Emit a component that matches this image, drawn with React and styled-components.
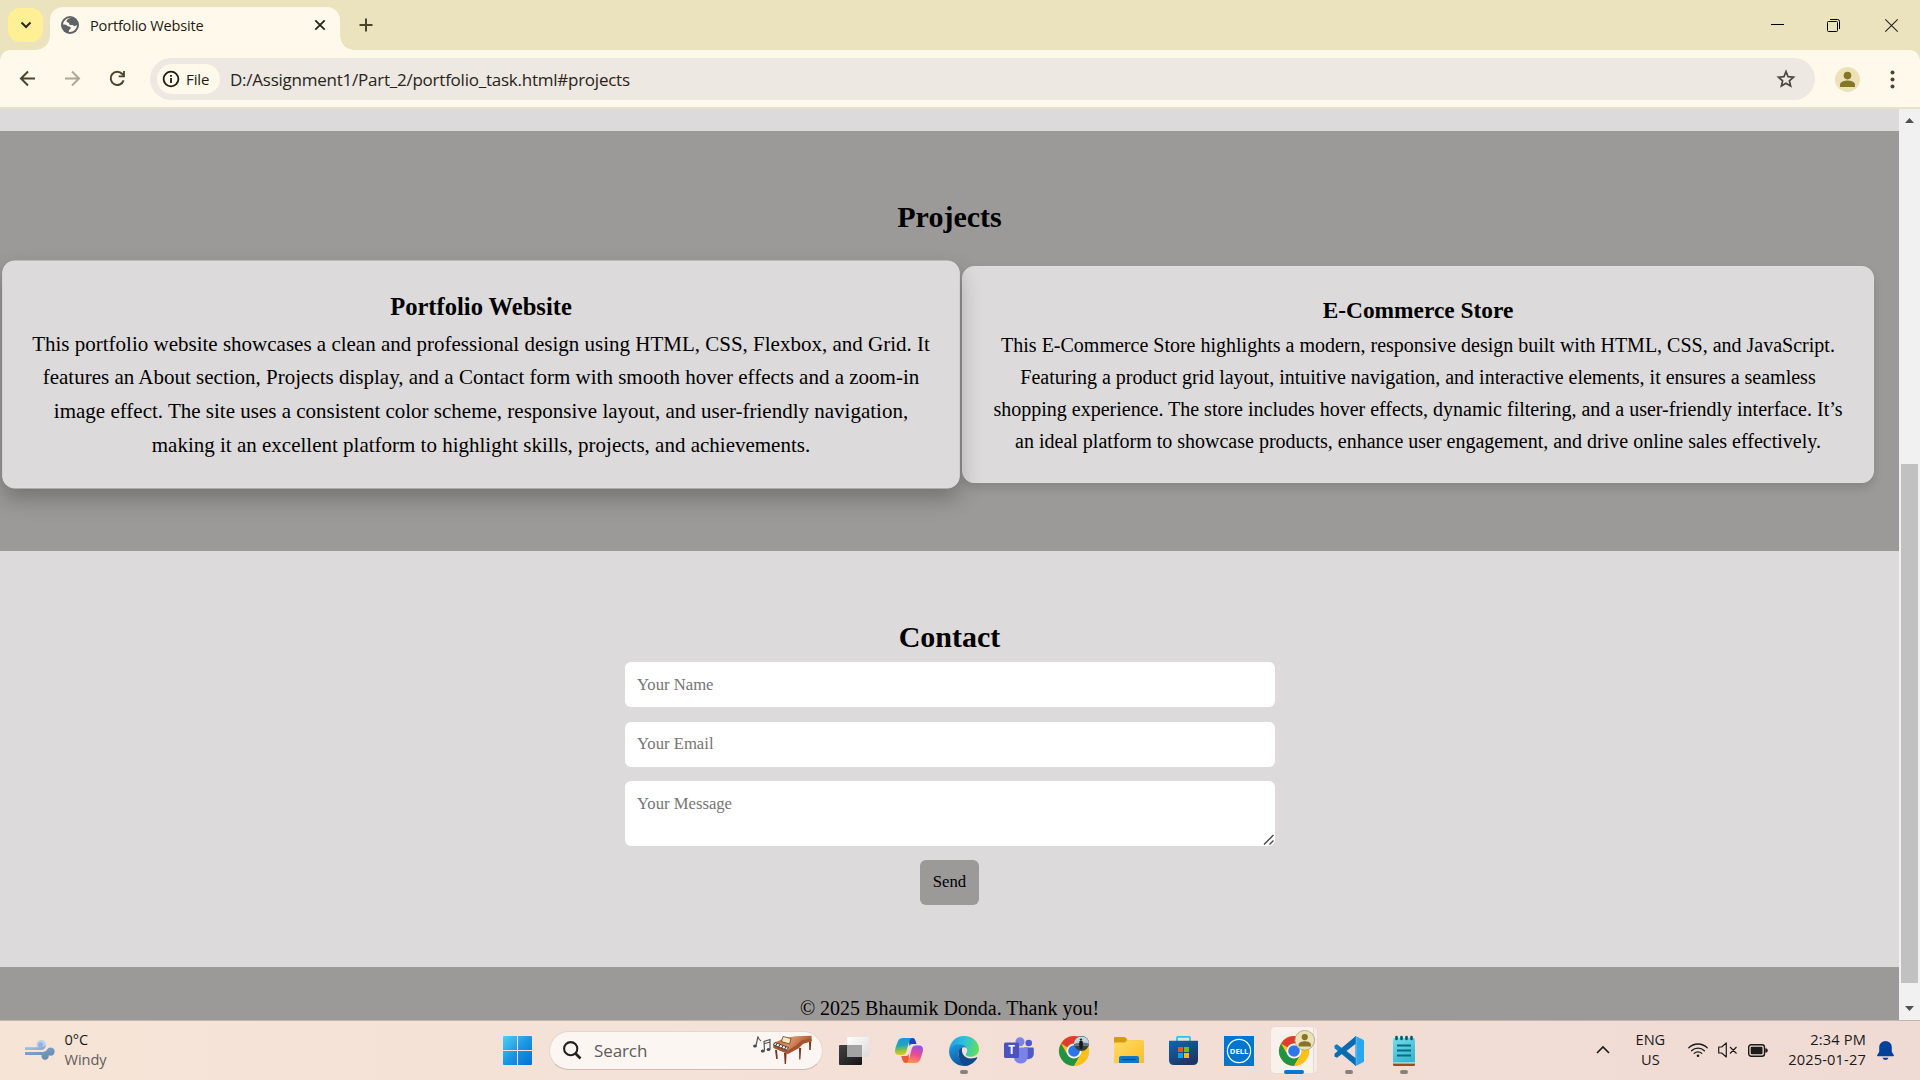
import React from "react";
import styled, { createGlobalStyle } from "styled-components";

const GlobalStyle = createGlobalStyle`
  * { box-sizing: border-box; margin: 0; padding: 0; }
  body { margin: 0; overflow: hidden; }
  svg { display: block; flex: none; overflow: visible; }
`;

const UI = `"Open Sans", "Noto Sans", sans-serif`;
const SERIF = `"Liberation Serif", "Times New Roman", serif`;

const Screen = styled.div`
  width: 1920px;
  height: 1080px;
  display: flex;
  flex-direction: column;
  overflow: hidden;
  font-family: ${UI};
  background: #ebe3bd;
`;

/* ---------- browser chrome ---------- */

const TabStrip = styled.header`
  height: 50px;
  flex: none;
  display: flex;
  align-items: flex-end;
  padding-left: 8px;
`;

const TabSearch = styled.button`
  width: 35px;
  height: 34px;
  margin-bottom: 8px;
  border: 0;
  border-radius: 12px;
  background: #fff095;
  display: flex;
  align-items: center;
  justify-content: center;
`;

const Tab = styled.div`
  position: relative;
  width: 290px;
  height: 43px;
  margin-left: 7px;
  padding: 0 14px 7px 11px;
  display: flex;
  align-items: center;
  border-radius: 13px 13px 0 0;
  background: #fff9eb;
  &::before, &::after {
    content: "";
    position: absolute;
    bottom: 0;
    width: 14px;
    height: 14px;
  }
  &::before {
    left: -14px;
    background: radial-gradient(circle at 0 0, transparent 13.5px, #fff9eb 14px);
  }
  &::after {
    right: -14px;
    background: radial-gradient(circle at 100% 0, transparent 13.5px, #fff9eb 14px);
  }
`;

const TabTitle = styled.span`
  flex: 1;
  margin-left: 11px;
  font-size: 14.6px;
  letter-spacing: -0.21px;
  line-height: 20px;
  color: #1f1c12;
  white-space: nowrap;
`;

const NewTab = styled.div`
  margin: 0 0 18px 19px;
`;

const WindowButtons = styled.div`
  margin-left: auto;
  height: 50px;
  padding-right: 22px;
  display: flex;
  align-items: center;
  gap: 43px;
  svg:last-child { margin-left: 2px; }
`;

const Toolbar = styled.div`
  height: 59px;
  flex: none;
  display: flex;
  align-items: center;
  padding: 1px 21px 0 17px;
  background: #fff9eb;
  border-bottom: 2px solid #e8e2cd;
  border-radius: 11px 11px 0 0;
`;

const NavButtons = styled.div`
  display: flex;
  gap: 24px;
  margin-right: 24px;
  padding-bottom: 1px;
`;

const ReloadSlot = styled.div`
  margin-left: 2px;
`;

const Omnibox = styled.div`
  flex: 1;
  height: 42px;
  border-radius: 21px;
  background: #ede8e1;
  display: flex;
  align-items: center;
  padding: 0 19px 0 7px;
`;

const FileChip = styled.div`
  width: 63px;
  height: 30px;
  border-radius: 15px;
  background: #fff9eb;
  display: flex;
  align-items: center;
  padding-left: 5px;
  gap: 6px;
  font-size: 15px;
  font-weight: 500;
  letter-spacing: -0.1px;
  color: #1f1c12;
`;

const Url = styled.span`
  flex: 1;
  margin-left: 10px;
  padding-top: 1px;
  font-size: 17px;
  letter-spacing: -0.24px;
  color: #28241a;
  white-space: nowrap;
`;

const Avatar = styled.div`
  margin: 0 26px 0 20px;
`;

/* ---------- page ---------- */

const Viewport = styled.div`
  height: 911px;
  flex: none;
  display: flex;
`;

const Page = styled.main`
  width: 1899px;
  height: 911px;
  padding-top: 22px;
  overflow: hidden;
  background: #dcdadb;
  font-family: ${SERIF};
  font-size: 20px;
  line-height: 32px;
  color: #000;
  text-align: center;
`;

const ProjectsSection = styled.section`
  height: 420px;
  padding: 61.5px 25px 0;
  background: #9c9a98;
`;

const SectionTitle = styled.h2`
  font-size: 30px;
  line-height: 48px;
  font-weight: bold;
`;

const ProjectGrid = styled.div`
  margin-top: 25.5px;
  display: grid;
  grid-template-columns: 1fr 1fr;
  gap: 25px;
`;

const ProjectCard = styled.article`
  padding: 25px;
  border: 1px solid #dfdddd;
  border-radius: 12px;
  background: #dcdadb;
  box-shadow: ${(p) => (p.$raised ? "0 10px 20px rgba(0,0,0,0.25)" : "0 5px 10px rgba(0,0,0,0.13)")};
  transform: ${(p) => (p.$raised ? "scale(1.05)" : "none")};
`;

const CardTitle = styled.h3`
  font-size: 23.4px;
  line-height: 37.4px;
  font-weight: bold;
`;

const ContactSection = styled.section`
  height: 416px;
  padding-top: 61.5px;
`;

const ContactForm = styled.form`
  width: 650px;
  margin: 1.5px auto 0;
  display: flex;
  flex-direction: column;
  align-items: center;
  gap: 14px;
`;

const Field = styled.input`
  width: 650px;
  height: 45px;
  padding: 0 12.5px ${(p) => p.$lift || 0}px;
  margin-bottom: ${(p) => p.$after || 0}px;
  border: 0;
  border-radius: 6px;
  background: #fff;
  font-family: ${SERIF};
  font-size: 16.67px;
  &::placeholder { color: #757575; }
`;

const MessageWrap = styled.div`
  position: relative;
  height: 65px;
  svg { position: absolute; right: 1px; bottom: 1px; }
`;

const Message = styled.textarea`
  display: block;
  width: 650px;
  height: 65px;
  padding: 13px 12.5px;
  border: 0;
  border-radius: 6px;
  background: #fff;
  font-family: ${SERIF};
  font-size: 16.67px;
  line-height: 20px;
  resize: none;
  &::placeholder { color: #757575; }
`;

const SendButton = styled.button`
  width: 59px;
  height: 45px;
  padding-bottom: 2px;
  border: 0;
  border-radius: 6px;
  background: #9c9a98;
  font-family: ${SERIF};
  font-size: 16.67px;
  color: #000;
`;

const PageFooter = styled.footer`
  height: 100px;
  padding-top: 25px;
  background: #9c9a98;
`;

const ScrollTrack = styled.div`
  width: 21px;
  background: #f1f1f1;
  display: flex;
  flex-direction: column;
  align-items: center;
  padding: 9px 0;
`;

const ScrollThumb = styled.div`
  width: 17px;
  height: 519px;
  margin: 341px 0 auto;
  background: #c1c1c1;
`;

/* ---------- taskbar ---------- */

const Taskbar = styled.footer`
  height: 60px;
  flex: none;
  display: flex;
  align-items: center;
  border-top: 1px solid #c4b5ae;
  background: linear-gradient(90deg, #f6e4d7 0%, #f4e1d7 35%, #f2ddd5 70%, #f0dbd4 100%);
`;

const Weather = styled.div`
  width: 478px;
  padding: 0 0 2px 25px;
  display: flex;
  align-items: center;
  gap: 9.5px;
`;

const TwoLines = styled.div`
  padding-bottom: 2px;
  font-size: 14.6px;
  line-height: 20px;
  letter-spacing: ${(p) => p.$track || "-0.05px"};
  color: #1b1a19;
  text-align: ${(p) => p.$align || "left"};
  white-space: nowrap;
`;

const Muted = styled.div`
  color: #625b57;
`;

const StartSlot = styled.div`
  width: 79px;
  display: flex;
  justify-content: center;
`;

const SearchBox = styled.div`
  width: 274px;
  height: 39px;
  margin-left: -8.5px;
  margin-top: -1px;
  border-radius: 20px;
  border: 1px solid #e6d5cd;
  border-bottom-color: #cdbab2;
  background: #fcf6f3;
  display: flex;
  align-items: center;
  padding: 0 10px 0 13px;
`;

const SearchLabel = styled.span`
  flex: 1;
  margin-left: 13.5px;
  font-size: 17px;
  letter-spacing: -0.1px;
  color: #5f5b59;
`;

const AppSlots = styled.nav`
  display: flex;
  margin-left: 4px;
`;

const AppSlot = styled.div`
  position: relative;
  width: 55px;
  height: 59px;
  display: flex;
  align-items: center;
  justify-content: center;
`;

const ActiveTile = styled.div`
  position: absolute;
  left: 3.5px;
  top: 5px;
  width: 48px;
  height: 48px;
  border-radius: 5px;
  border: 1px solid #eadbd5;
  background: linear-gradient(90deg, #faf1ed 42px, #e6d8d2 42px, #e6d8d2 43px, #f7ebe6 43px);
`;

const AppIcon = styled.div`
  position: relative;
`;

const Indicator = styled.div`
  position: absolute;
  bottom: 6px;
  left: 50%;
  width: ${(p) => (p.$active ? 20 : 8)}px;
  height: 4px;
  border-radius: 2px;
  transform: translateX(-50%);
  background: ${(p) => (p.$active ? "#0078d4" : "#8a807b")};
`;

const Tray = styled.div`
  margin-left: auto;
  padding: 0 26px 1px 0;
  display: flex;
  align-items: center;
`;

const TrayItem = styled.div`
  margin-left: ${(p) => p.$gap}px;
`;

/* ---------- icons ---------- */

const Line = ({ w, h, d, color = "#2b271c", sw = 2, ...rest }) => (
  <svg width={w} height={h} viewBox={`0 0 ${w} ${h}`} fill="none" stroke={color} strokeWidth={sw} {...rest}>
    <path d={d} />
  </svg>
);

const Globe = () => (
  <svg width="18" height="18" viewBox="0 0 18 18">
    <circle cx="9" cy="9" r="9" fill="#5f6368" />
    <path d="M10.200 1.900C8.200 2 5.500 3.300 5.600 5.200c.1 1.300 1.500.9 2.300 1.700.6.700 0 1.500.9 1.900 1.300.6 2.600-.2 3.500.8.6.7 1.500.5 3.700-.6A7.100 7.100 0 0 1 7.900 16v-1.600c.2-.9 2-1.200 1.900-2.600-.1-1.500-2.700-.9-3.600-2.100-.9-1.100-1.900-1.200-4.200-1.200A7.200 7.200 0 0 1 10.200 1.900z" fill="#fff9eb" />
  </svg>
);

const Reload = () => (
  <svg width="17" height="17" viewBox="0 0 17 17">
    <path d="M14.600 10.400A6.600 6.600 0 1 1 13.300 4l1.200 1.500" fill="none" stroke="#4a452c" strokeWidth="2" />
    <path d="M15.900 1v6.300H9.700V5.500h4.400V1z" fill="#4a452c" />
  </svg>
);

const Info = () => (
  <svg width="18" height="18" viewBox="0 0 18 18">
    <circle cx="9" cy="9" r="7.400" fill="none" stroke="#1f1c12" strokeWidth="1.800" />
    <path d="M8.100 8h1.800v5H8.100zM8.100 5h1.800v1.800H8.100z" fill="#1f1c12" />
  </svg>
);

const Star = () => (
  <svg width="20" height="20" viewBox="0 0 20 20" fill="none" stroke="#4a4740" strokeWidth="1.700">
    <path d="M10 2.600l2.100 5.100 5.400.5-4.100 3.600 1.200 5.300-4.600-2.800-4.600 2.800 1.200-5.300-4.100-3.600 5.400-.5z" />
  </svg>
);

const Person = ({ size, ring }) => (
  <svg width={size} height={size} viewBox="0 0 25 25">
    <circle cx="12.500" cy="12.500" r={ring ? 12 : 12.5} fill="#ebe2b7" stroke={ring ? "#aaa283" : "none"} />
    <circle cx="12.500" cy="8.600" r="3.800" fill="#857626" />
    <path d="M5 20v-2.400c0-2.800 4.600-4 7.500-4s7.500 1.200 7.500 4V20z" fill="#857626" />
  </svg>
);

const WindowsLogo = () => (
  <svg width="29" height="29" viewBox="0 0 29 29">
    <defs>
      <linearGradient id="win" x1="0" y1="0" x2="1" y2="1">
        <stop offset="0" stopColor="#4fd0fb" />
        <stop offset="0.5" stopColor="#1c95e2" />
        <stop offset="1" stopColor="#0571d2" />
      </linearGradient>
    </defs>
    <path d="M1 0h13v14H0V1q0-1 1-1zM15 0h13q1 0 1 1v13H15zM0 15h14v14H1q-1 0-1-1zM15 15h14v13q0 1-1 1H15z" fill="url(#win)" />
  </svg>
);

const Wind = () => (
  <svg width="30" height="20" viewBox="0 0 30 20">
    <defs>
      <linearGradient id="wndA" x1="0" y1="0" x2="1" y2="0">
        <stop offset="0" stopColor="#a3bce2" />
        <stop offset="1" stopColor="#8aa9d8" />
      </linearGradient>
      <linearGradient id="wndB" x1="0" y1="0" x2="1" y2="1">
        <stop offset="0" stopColor="#86abd3" />
        <stop offset="1" stopColor="#5d86ab" />
      </linearGradient>
    </defs>
    <circle cx="16.300" cy="4.700" r="4.700" fill="#b9cdec" />
    <circle cx="15.500" cy="5" r="2.400" fill="#93afdc" />
    <path d="M0 7.200h15.500q3.500 0 5.300-2Q20.500 10 16 10H0z" fill="url(#wndA)" />
    <path d="M0 12h18q3-.2 4-2.200a4 4 0 1 1 3.200 5.800q-1.200 0-1.600-.2a3.600 3.600 0 1 1-6.900-.4H0z" fill="url(#wndB)" />
  </svg>
);

const Piano = () => (
  <svg width="59" height="30" viewBox="0 0 59 30">
    <defs>
      <linearGradient id="pno" x1="0" y1="0" x2="1" y2="0.4">
        <stop offset="0" stopColor="#b35f3c" />
        <stop offset="0.5" stopColor="#d98f66" />
        <stop offset="1" stopColor="#a54e2b" />
      </linearGradient>
    </defs>
    <g fill="none" stroke="#55585b" strokeWidth="1.200">
      <path d="M3 10.500L5 1.500Q5.500 4.500 8 6M11.500 15.500L11 6.500L17 4.500V14M11.200 8.800L17 7" />
    </g>
    <g fill="#45484b">
      <ellipse cx="2" cy="11" rx="1.900" ry="1.500" />
      <ellipse cx="9.800" cy="16" rx="2" ry="1.500" />
      <ellipse cx="15.500" cy="14.500" rx="1.900" ry="1.500" />
    </g>
    <path d="M22 15h2l.8 9h-1.600zM31 18h2.600l-.6 11h-1.300zM46 13h2.200l-.8 11.500h-1.200zM56 5h2.300l-.6 10h-1.500z" fill="#7b3420" />
    <path d="M20.500 8L31 3.500 42 1.200 58.500.8V6L50 8.500 46 12.500 35 18.500 20.500 12.500z" fill="url(#pno)" />
    <path d="M20.500 10L34.500 15.500 43 10.500 48.500 5.500 58.500 3.500V6.200L50 8.800 46 13 35 19 20.500 13z" fill="#a4522f" />
    <path d="M22 7.500L35.500 12.500 33.500 15 20.500 10z" fill="#f0ece6" stroke="#3c2a22" strokeWidth=".8" />
    <path d="M24 8.500l-1.500 2.500M27 9.600l-1.500 2.500M30 10.700l-1.500 2.500M33 11.800l-1.500 2.500" stroke="#333" strokeWidth="1" />
    <path d="M30 1.500L38 3.500 36.500 9 28.500 6.500z" fill="#f8e9c0" stroke="#6e3f20" strokeWidth=".8" />
  </svg>
);

const TaskView = () => (
  <svg width="30" height="28" viewBox="0 0 30 28">
    <defs>
      <linearGradient id="tv1" x1="0" y1="0" x2="1" y2="1">
        <stop offset="0" stopColor="#424242" />
        <stop offset="1" stopColor="#161616" />
      </linearGradient>
      <linearGradient id="tv2" x1="0" y1="0" x2="1" y2="1">
        <stop offset="0" stopColor="#fff" />
        <stop offset="1" stopColor="#dcdcdc" />
      </linearGradient>
    </defs>
    <rect x="0" y="8" width="23" height="20" rx="1" fill="url(#tv1)" />
    <rect x="8" y="0" width="22" height="20" rx="1" fill="url(#tv2)" />
    <rect x="8" y="8" width="15" height="12" fill="#a3a3a3" />
  </svg>
);

const Copilot = () => (
  <svg width="28" height="25" viewBox="0 0 28 25">
    <defs>
      <linearGradient id="cp1" x1="0.2" y1="0" x2="0.3" y2="1">
        <stop offset="0" stopColor="#1596e4" />
        <stop offset="0.45" stopColor="#22a6b5" />
        <stop offset="0.75" stopColor="#8fc43f" />
        <stop offset="1" stopColor="#f0c51e" />
      </linearGradient>
      <linearGradient id="cp2" x1="0.6" y1="0" x2="0.3" y2="1">
        <stop offset="0" stopColor="#9a50e4" />
        <stop offset="0.5" stopColor="#ec4c93" />
        <stop offset="1" stopColor="#ff9a42" />
      </linearGradient>
    </defs>
    <path d="M14 0h3.500q2.200 0 2.900 2.400L21.500 6H17q-2 0-2.700 2z" fill="#1d3fc4" />
    <path d="M8 0h9q-2 .4-2.700 3l-3 10.500Q10.400 17 7.500 17H4Q0 17 0 13q0-2.500 1.500-6L3 3Q4.300 0 8 0z" fill="url(#cp1)" />
    <path d="M14 25h-3.500q-2.200 0-2.900-2.400L6.300 18H11q2 0 2.700-2z" fill="#ef5a3c" />
    <path d="M20 25h-9q2-.4 2.700-3l3-11Q17.600 7.500 20.500 7.500H24q4 0 4 4 0 2.500-1.500 6L25 22q-1.300 3-5 3z" fill="url(#cp2)" />
  </svg>
);

const Edge = () => (
  <svg width="30" height="30" viewBox="0 0 30 30">
    <defs>
      <linearGradient id="eg1" x1="0" y1="0.3" x2="1" y2="0.5">
        <stop offset="0" stopColor="#249fe2" />
        <stop offset="0.5" stopColor="#2bc3dc" />
        <stop offset="1" stopColor="#63df55" />
      </linearGradient>
      <linearGradient id="eg2" x1="0" y1="0" x2="0.4" y2="1">
        <stop offset="0" stopColor="#1b9de2" />
        <stop offset="1" stopColor="#0c59a4" />
      </linearGradient>
    </defs>
    <path d="M0 14.500C.8 6 7 0 15 0c9 0 15 6.300 15 13 0 5-4 7.700-8 7.700-3.500 0-5.300-1-5.300-2.200 0-.8 1.500-1.500 1.500-4 0-3-3-5.700-7.500-5.700C6 8.800 2 11 0 14.500z" fill="url(#eg1)" />
    <path d="M0 15C1 10.500 5.500 8.200 10 8.200c4 0 6.500 1.600 7.500 3.600-4-2-8 1.500-8 6 0 5.500 4 10.500 10.500 11.300A15 15 0 0 1 0 15z" fill="url(#eg2)" />
    <path d="M9.500 17c0-3 1.500-5 3.700-5.600-1.200 4 .8 11 8.800 11 2.700 0 4.500-.7 5.600-1.200.7-.2 1 .3.600.9C26 25.800 22 29.500 17 29.800 12 28.500 9.500 22.500 9.500 17z" fill="#114a8b" />
  </svg>
);

const Teams = () => (
  <svg width="30" height="27" viewBox="0 0 30 27">
    <circle cx="24.700" cy="6" r="3.300" fill="#5059c9" />
    <path d="M20 10.500h8.600q1.200 0 1.200 1.200V17a5.500 5.500 0 0 1-9.800 3z" fill="#5059c9" />
    <circle cx="16" cy="4.700" r="4.500" fill="#7b83eb" />
    <path d="M10 10.500h12.500q1.300 0 1.300 1.300V19c0 4.500-3 7.500-7 7.500s-7-3-7-7z" fill="#7b83eb" />
    <rect x="0" y="5.500" width="15" height="15.500" rx="1.500" fill="#4b53bc" />
    <text x="7.500" y="17.300" fontFamily="Open Sans, sans-serif" fontSize="11.500" fontWeight="700" fill="#fff" textAnchor="middle">T</text>
  </svg>
);

const Chrome = ({ children }) => (
  <svg width="30" height="30" viewBox="0 0 30 30">
    <circle cx="15" cy="15" r="15" fill="#fbc116" />
    <path d="M15 15L2 7.500A15 15 0 0 1 28 7.500H15z" fill="#e33b2e" />
    <path d="M2 7.500A15 15 0 0 0 15 30l6.500-11.250L15 15 8.500 18.750z" fill="#229342" />
    <path d="M28 7.500A15 15 0 0 1 15 30l6.500-11.250V7.500z" fill="#fbc116" />
    <circle cx="15" cy="15" r="7.500" fill="#fff" />
    <circle cx="15" cy="15" r="5.800" fill="#2f75ea" />
    {children}
  </svg>
);

const PhotoBadge = () => (
  <g>
    <circle cx="22.500" cy="7.500" r="7.600" fill="#35443a" />
    <path d="M14.900 8a7.600 7.600 0 1 1 15.200 0z" fill="#c3d4e2" />
    <path d="M15 8.500q3-2.500 5-1.500 5-1 10 .5l-.2 2.500H15.200z" fill="#67787c" />
    <circle cx="22" cy="3.600" r="1.200" fill="#2a2422" />
    <path d="M20.500 5h3l.6 3.500-.8 4.500h-2.400l-.8-4.500z" fill="#15181c" />
  </g>
);

const Explorer = () => (
  <svg width="30" height="27" viewBox="0 0 30 27">
    <defs>
      <linearGradient id="fx" x1="0" y1="0" x2="1" y2="1">
        <stop offset="0" stopColor="#ffdd68" />
        <stop offset="1" stopColor="#f9bd24" />
      </linearGradient>
    </defs>
    <path d="M1 0h9q1 0 2 1l2 2.500h14v8H0V1q0-1 1-1z" fill="#d89a10" />
    <path d="M0 5.500h11l2-2.300h16q1 0 1 1V26H0z" fill="url(#fx)" />
    <path d="M5 26v-5q0-2 2-2h16q2 0 2 2v5z" fill="#0f78c8" />
    <path d="M8.500 22.500h13" stroke="#0a4a85" strokeWidth="1.300" />
  </svg>
);

const Store = () => (
  <svg width="30" height="29" viewBox="0 0 30 29">
    <defs>
      <linearGradient id="st" x1="0" y1="0" x2="0.6" y2="1">
        <stop offset="0" stopColor="#0968b4" />
        <stop offset="1" stopColor="#21365e" />
      </linearGradient>
    </defs>
    <path d="M8 5V1.800q0-1 1-1h11q1 0 1 1V5" fill="none" stroke="#2cc0f5" strokeWidth="1.800" />
    <path d="M0 4.700h29V24q0 5-5 5H5q-5 0-5-5z" fill="url(#st)" />
    <path d="M9 11h5v5H9z" fill="#f25022" />
    <path d="M15 11h5v5h-5z" fill="#7fba00" />
    <path d="M9 17h5v5H9z" fill="#00a4ef" />
    <path d="M15 17h5v5h-5z" fill="#ffb900" />
  </svg>
);

const Dell = () => (
  <svg width="30" height="30" viewBox="0 0 30 30">
    <rect width="30" height="30" fill="#0076ce" />
    <circle cx="15" cy="15" r="11.600" fill="none" stroke="#fff" strokeWidth="1.200" />
    <text x="15" y="17.600" fontFamily="Open Sans, sans-serif" fontSize="7.200" fontWeight="700" fill="#fff" textAnchor="middle" textLength="18.500" lengthAdjust="spacingAndGlyphs">DELL</text>
  </svg>
);

const VSCode = () => (
  <svg width="30" height="30" viewBox="0 0 30 30">
    <path d="M22 0L8.500 12.500 3 8.300 .5 9.500v2.700L22 30v-7.500z" fill="#0f7dc4" />
    <path d="M22 30L8.500 17.500 3 21.700.5 20.500v-2.700L22 0v7.500z" fill="#0a6bb0" />
    <path d="M21.500 0l7.300 3.400Q30 4 30 5v20q0 1-1.200 1.600L21.500 30q1-.3 1-2V2q0-1.700-1-2z" fill="#2aa6f2" />
    <path d="M22 7.500L12.500 15l9.500 7.500z" fill="#f2ddd5" />
    <path d="M22.400 1v28l-1 .8v-29z" fill="#2294de" />
  </svg>
);

const Notepad = () => (
  <svg width="22" height="30" viewBox="0 0 22 30">
    <defs>
      <linearGradient id="np" x1="0" y1="0" x2="0.5" y2="1">
        <stop offset="0" stopColor="#76dcec" />
        <stop offset="1" stopColor="#35b8d2" />
      </linearGradient>
    </defs>
    <path d="M0 27h22v1.500q0 1.500-1.500 1.500h-19Q0 30 0 28.500z" fill="#96501c" />
    <path d="M0 3.500q0-1.500 1.500-1.500h19Q22 2 22 3.500V27H0z" fill="url(#np)" />
    <path d="M0 26.500h22V27.500H0z" fill="#f6efe9" />
    <path d="M4 9.500h14M4 14.500h14M4 19.500h14" stroke="#0b6a80" strokeWidth="1.800" />
    <path d="M3.500 1v2M8.500 1v2M13.500 1v2M18.500 1v2" stroke="#0b5466" strokeWidth="2.600" strokeLinecap="round" />
  </svg>
);

const Wifi = () => (
  <svg width="20" height="16" viewBox="0 0 20 16" fill="none" stroke="#1b1a19" strokeWidth="1.300" strokeLinecap="round">
    <path d="M.8 5.800a13 13 0 0 1 18.400 0M3.600 8.700a9 9 0 0 1 12.800 0M6.200 11.400a5.400 5.400 0 0 1 7.600 0" />
    <circle cx="10" cy="13.700" r="1.300" fill="#1b1a19" stroke="none" />
  </svg>
);

const SpeakerOff = () => (
  <svg width="20" height="16" viewBox="0 0 20 16" fill="none" stroke="#1b1a19" strokeWidth="1.200">
    <path d="M.7 5h3L8.300 1v14L3.700 11h-3zM12 5l6.500 6.500M18.500 5L12 11.500" strokeLinejoin="round" />
  </svg>
);

const Battery = () => (
  <svg width="20" height="13" viewBox="0 0 20 13">
    <rect x=".7" y=".7" width="15.800" height="11.600" rx="2.500" fill="none" stroke="#1b1a19" strokeWidth="1.400" />
    <rect x="2.700" y="2.700" width="11.800" height="7.600" rx="1" fill="#1b1a19" />
    <path d="M17.300 4.200q2.500 0 2.500 2.300t-2.500 2.300z" fill="#1b1a19" />
  </svg>
);

const Bell = () => (
  <svg width="17" height="19" viewBox="0 0 17 19" fill="#03419a">
    <path d="M8.500 0a6.300 6.300 0 0 1 6.300 6.300v4.500L17 14.500q0 .8-1 .8H1q-1 0-1-.8l2.200-3.700V6.300A6.300 6.300 0 0 1 8.500 0zM5.500 16.700h6q-.8 2.300-3 2.300t-3-2.300z" />
  </svg>
);

const Arrow = ({ up }) => (
  <svg width="9" height="5" viewBox="0 0 9 5">
    <path d={up ? "M0 5L4.500 0 9 5z" : "M0 0l4.500 5L9 0z"} fill="#505050" />
  </svg>
);

const apps = [
  { id: "taskview", icon: <TaskView /> },
  { id: "copilot", icon: <Copilot /> },
  { id: "edge", icon: <Edge />, running: true },
  { id: "teams", icon: <Teams /> },
  { id: "chrome", icon: <Chrome><PhotoBadge /></Chrome> },
  { id: "explorer", icon: <Explorer /> },
  { id: "store", icon: <Store /> },
  { id: "dell", icon: <Dell /> },
  {
    id: "chrome-active",
    icon: (
      <Chrome>
        <g transform="translate(15.500 -6)"><Person size={20.5} ring /></g>
      </Chrome>
    ),
    running: true,
    active: true,
  },
  { id: "vscode", icon: <VSCode />, running: true },
  { id: "notepad", icon: <Notepad />, running: true },
];

const projects = [
  {
    title: "Portfolio Website",
    raised: true,
    text: "This portfolio website showcases a clean and professional design using HTML, CSS, Flexbox, and Grid. It features an About section, Projects display, and a Contact form with smooth hover effects and a zoom-in image effect. The site uses a consistent color scheme, responsive layout, and user-friendly navigation, making it an excellent platform to highlight skills, projects, and achievements.",
  },
  {
    title: "E-Commerce Store",
    text: "This E-Commerce Store highlights a modern, responsive design built with HTML, CSS, and JavaScript. Featuring a product grid layout, intuitive navigation, and interactive elements, it ensures a seamless shopping experience. The store includes hover effects, dynamic filtering, and a user-friendly interface. It’s an ideal platform to showcase products, enhance user engagement, and drive online sales effectively.",
  },
];

export default function App() {
  return (
    <Screen>
      <GlobalStyle />
      <TabStrip>
        <TabSearch><Line w={12} h={8} d="M1.500 1.500L6 6l4.500-4.500" /></TabSearch>
        <Tab>
          <Globe />
          <TabTitle>Portfolio Website</TabTitle>
          <Line w={12} h={12} d="M1.300 1.300l9.400 9.400M10.700 1.300L1.300 10.700" sw={1.9} />
        </Tab>
        <NewTab><Line w={14} h={14} d="M7 .5v13M.5 7h13" color="#4a452c" /></NewTab>
        <WindowButtons>
          <Line w={13} h={13} d="M0 5.500h13" color="#000" sw={1} />
          <Line w={13} h={13} d="M.5 3.500q0-1 1-1h8q1 0 1 1v8q0 1-1 1h-8q-1 0-1-1zM3 .5h7.500q2 0 2 2V10" color="#000" sw={1} />
          <Line w={13} h={13} d="M.3.3l12.400 12.400M12.700.3L.3 12.700" color="#222" sw={1.1} />
        </WindowButtons>
      </TabStrip>
      <Toolbar>
        <NavButtons>
          <Line w={21} h={17} d="M18 8.500H4.500M11 1.500l-7 7 7 7" color="#4a452c" />
          <Line w={21} h={17} d="M3 8.500h13.500M10 1.500l7 7-7 7" color="#aca895" />
          <ReloadSlot><Reload /></ReloadSlot>
        </NavButtons>
        <Omnibox>
          <FileChip><Info />File</FileChip>
          <Url>D:/Assignment1/Part_2/portfolio_task.html#projects</Url>
          <Star />
        </Omnibox>
        <Avatar><Person size={25} /></Avatar>
        <svg width="13" height="19" viewBox="0 0 13 19" fill="#4a452c">
          <circle cx="6.500" cy="2.500" r="2" />
          <circle cx="6.500" cy="9.500" r="2" />
          <circle cx="6.500" cy="16.500" r="2" />
        </svg>
      </Toolbar>

      <Viewport>
        <Page>
          <ProjectsSection>
            <SectionTitle>Projects</SectionTitle>
            <ProjectGrid>
              {projects.map((p) => (
                <ProjectCard key={p.title} $raised={p.raised}>
                  <CardTitle>{p.title}</CardTitle>
                  <p>{p.text}</p>
                </ProjectCard>
              ))}
            </ProjectGrid>
          </ProjectsSection>
          <ContactSection>
            <SectionTitle>Contact</SectionTitle>
            <ContactForm>
              <Field placeholder="Your Name" $after={1} />
              <Field placeholder="Your Email" $lift={2} />
              <MessageWrap>
                <Message placeholder="Your Message" />
                <Line w={10} h={10} d="M0 9.500L9.500 0M5.500 9.500l4-4" color="#444" sw={1.3} />
              </MessageWrap>
              <SendButton type="button">Send</SendButton>
            </ContactForm>
          </ContactSection>
          <PageFooter>© 2025 Bhaumik Donda. Thank you!</PageFooter>
        </Page>
        <ScrollTrack>
          <Arrow up />
          <ScrollThumb />
          <Arrow />
        </ScrollTrack>
      </Viewport>

      <Taskbar>
        <Weather>
          <Wind />
          <TwoLines>
            0°C
            <Muted>Windy</Muted>
          </TwoLines>
        </Weather>
        <StartSlot><WindowsLogo /></StartSlot>
        <SearchBox>
          <svg width="18" height="18" viewBox="0 0 18 18" fill="none" stroke="#232120" strokeWidth="2.100">
            <circle cx="7.700" cy="7.700" r="6.600" />
            <path d="M12.500 12.500l5 5" strokeWidth="2.600" />
          </svg>
          <SearchLabel>Search</SearchLabel>
          <Piano />
        </SearchBox>
        <AppSlots>
          {apps.map((a) => (
            <AppSlot key={a.id}>
              {a.active && <ActiveTile />}
              <AppIcon>{a.icon}</AppIcon>
              {a.running && <Indicator $active={a.active} />}
            </AppSlot>
          ))}
        </AppSlots>
        <Tray>
          <Line w={14} h={8} d="M1 7l6-6 6 6" color="#1b1a19" sw={1.6} />
          <TrayItem $gap={26}><TwoLines $align="center">ENG<br />US</TwoLines></TrayItem>
          <TrayItem $gap={23}><Wifi /></TrayItem>
          <TrayItem $gap={10}><SpeakerOff /></TrayItem>
          <TrayItem $gap={10}><Battery /></TrayItem>
          <TrayItem $gap={20}><TwoLines $align="right" $track="0.17px">2:34 PM<br />2025-01-27</TwoLines></TrayItem>
          <TrayItem $gap={11}><Bell /></TrayItem>
        </Tray>
      </Taskbar>
    </Screen>
  );
}
